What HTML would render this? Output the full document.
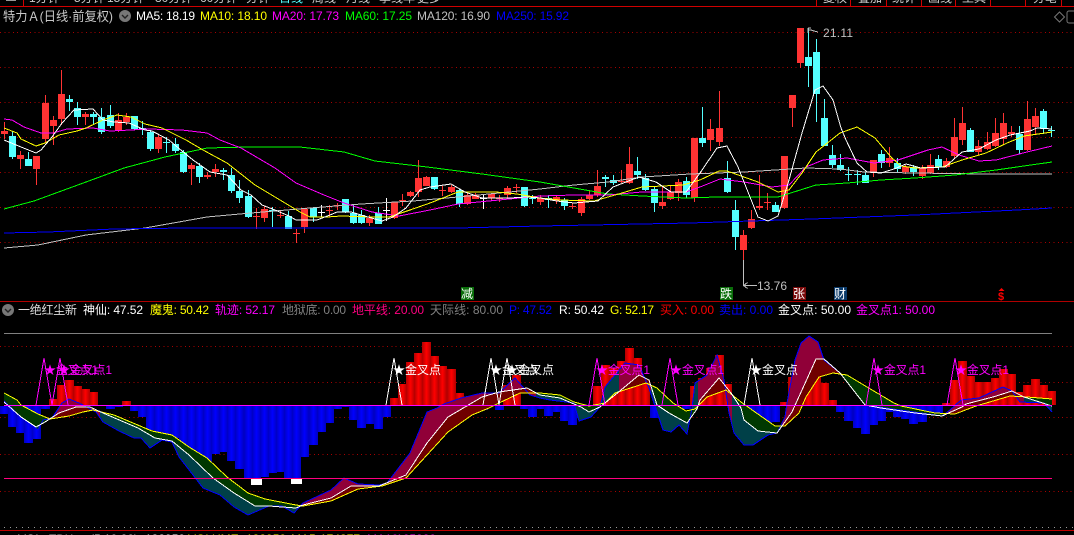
<!DOCTYPE html>
<html><head><meta charset="utf-8"><style>
html,body{margin:0;padding:0;background:#000;width:1074px;height:535px;overflow:hidden}
svg{display:block;position:absolute;left:0;top:0}
text{font-family:"Liberation Sans","WenQuanYi Zen Hei","Noto Sans CJK SC",sans-serif;font-size:12px}
.s{shape-rendering:crispEdges}
</style></head><body>
<svg id="c" width="1074" height="535" viewBox="0 0 1074 535" xmlns="http://www.w3.org/2000/svg">
<defs>
<linearGradient id="gr" x1="0" x2="1" y1="0" y2="0"><stop offset="0" stop-color="#b00000"/><stop offset=".5" stop-color="#ff0000"/><stop offset="1" stop-color="#b00000"/></linearGradient>
<linearGradient id="gb" x1="0" x2="1" y1="0" y2="0"><stop offset="0" stop-color="#0000c0"/><stop offset=".5" stop-color="#0000ff"/><stop offset="1" stop-color="#0000c0"/></linearGradient>
</defs>
<rect width="1074" height="535" fill="#000"/>
<g id="grid" class="s"></g>
<g id="candles" class="s"></g>
<g id="malines" class="s" fill="none"></g>
<g id="bars" class="s"></g>
<g id="rib" class="s"></g>
<g id="lines2" class="s" fill="none"></g>

<!-- top bar -->
<g fill="#ccc">
<text x="29" y="2">1分钟</text><text x="74" y="2">5分钟</text><text x="107" y="2">15分钟</text><text x="155" y="2">30分钟</text><text x="200" y="2">60分钟</text><text x="246" y="2">分钟</text><text x="279" y="2" fill="#54ffff">日线</text><text x="312" y="2">周线</text><text x="346" y="2">月线</text><text x="379" y="2">季线年</text><text x="417" y="2">更多</text>
<text x="823" y="2">复权</text><text x="858" y="2">叠加</text><text x="892" y="2">统计</text><text x="928" y="2">画线</text><text x="962" y="2">工具</text><text x="1033" y="2">分笔</text>
</g>
<g class="s">
<rect x="0" y="6" width="1074" height="1" fill="#d00000"/>
<rect x="23" y="0" width="1" height="6" fill="#d00000"/>
<rect x="816" y="0" width="1" height="6" fill="#d00000"/><rect x="850" y="0" width="1" height="6" fill="#d00000"/><rect x="886" y="0" width="1" height="6" fill="#d00000"/><rect x="921" y="0" width="1" height="6" fill="#d00000"/><rect x="955" y="0" width="1" height="6" fill="#d00000"/><rect x="990" y="0" width="1" height="6" fill="#d00000"/><rect x="1025" y="0" width="1" height="6" fill="#d00000"/><rect x="1061" y="0" width="1" height="6" fill="#d00000"/>
<rect x="6" y="0" width="10" height="1" fill="#999"/>
</g>

<!-- main header -->
<text x="3" y="21" fill="#c8c8c8" textLength="110" lengthAdjust="spacingAndGlyphs" style="font-size:13px">特力Ａ(日线·前复权)</text>
<circle cx="125" cy="16" r="6" fill="#777"/><path d="M122 15l3 3 3-3" stroke="#222" stroke-width="1.4" fill="none"/>
<text x="136" y="20" fill="#fff" textLength="59">MA5: 18.19</text>
<text x="200" y="20" fill="#ffff00" textLength="67">MA10: 18.10</text>
<text x="272" y="20" fill="#ff00ff" textLength="67">MA20: 17.73</text>
<text x="345" y="20" fill="#00ff00" textLength="67">MA60: 17.25</text>
<text x="417" y="20" fill="#c0c0c0" textLength="73">MA120: 16.90</text>
<text x="496" y="20" fill="#0000ff" textLength="73">MA250: 15.92</text>
<path d="M1059.5 12l5 5-5 5-5-5z" stroke="#777" fill="none"/>
<rect x="1067" y="11" width="12" height="12" rx="2" stroke="#777" fill="none"/>

<!-- price marks -->
<path d="M808 28h3M808 30h3M808 28v5M811 30l3 1 4 1" stroke="#c0c0c0" fill="none" class="s"/>
<text x="823" y="37" fill="#c0c0c0" textLength="30">21.11</text>
<path d="M743.500 260V285.500H757M743.500 285.500l4-3M743.500 285.500l4 3" stroke="#c0c0c0" fill="none" class="s"/>
<text x="757" y="290" fill="#c0c0c0" textLength="30">13.76</text>

<!-- tags -->
<rect x="461" y="287" width="13" height="13" fill="#0a6e0a"/><text x="461" y="298" fill="#fff" textLength="13" style="font-size:12px">减</text>
<rect x="720" y="287" width="13" height="13" fill="#0a6e0a"/><text x="720" y="298" fill="#fff" textLength="13" style="font-size:12px">跌</text>
<rect x="793" y="287" width="13" height="13" fill="#7a0a0a"/><text x="793" y="298" fill="#fff" textLength="13" style="font-size:12px">张</text>
<rect x="834" y="287" width="13" height="13" fill="#0a3a6a"/><text x="834" y="298" fill="#fff" textLength="13" style="font-size:12px">财</text>
<text x="998" y="300" fill="#ff0000" style="font-size:11px;font-weight:bold">$</text>
<path d="M1001.500 288l-3 3h6z" fill="#ff0000"/>

<rect x="0" y="301" width="1074" height="1" fill="#b00000" class="s"/>

<!-- indicator header -->
<circle cx="8" cy="310" r="6" fill="#777"/><path d="M5 309l3 3 3-3" stroke="#222" stroke-width="1.400" fill="none"/>
<text x="18" y="314" fill="#ddd" textLength="59">一绝红尘新</text>
<text x="83" y="314" fill="#fff" textLength="60">神仙: 47.52</text>
<text x="150" y="314" fill="#ffff00" textLength="59">魔鬼: 50.42</text>
<text x="215" y="314" fill="#ff00ff" textLength="60">轨迹: 52.17</text>
<text x="282" y="314" fill="#808080" textLength="64">地狱底: 0.00</text>
<text x="352" y="314" fill="#ff0080" textLength="72">地平线: 20.00</text>
<text x="430" y="314" fill="#808080" textLength="73">天际线: 80.00</text>
<text x="509" y="314" fill="#0000ff" textLength="43">P: 47.52</text>
<text x="559" y="314" fill="#fff" textLength="45">R: 50.42</text>
<text x="610" y="314" fill="#ffff00" textLength="44">G: 52.17</text>
<text x="660" y="314" fill="#ff0000" textLength="54">买入: 0.00</text>
<text x="719" y="314" fill="#0000ff" textLength="54">卖出: 0.00</text>
<text x="778" y="314" fill="#fff" textLength="73">金叉点: 50.00</text>
<text x="856" y="314" fill="#ff00ff" textLength="79">金叉点1: 50.00</text>

<!-- signal labels -->
<g fill="#ff00ff" style="font-size:12px">
<text x="44" y="374" textLength="54">★金叉点1</text><text x="58" y="374" textLength="54">★金叉点1</text>
<text x="596" y="374" textLength="54">★金叉点1</text><text x="670" y="374" textLength="54">★金叉点1</text>
<text x="872" y="374" textLength="54">★金叉点1</text><text x="955" y="374" textLength="54">★金叉点1</text>
</g>
<g fill="#fff">
<text x="393" y="374" textLength="48">★金叉点</text><text x="490" y="374" textLength="48">★金叉点</text><text x="506" y="374" textLength="48">★金叉点</text><text x="750" y="374" textLength="48">★金叉点</text>
</g>

<!-- white blocks -->
<rect x="251" y="479" width="11" height="6" fill="#fff" class="s"/><rect x="291" y="479" width="11" height="5" fill="#fff" class="s"/>

<rect x="0" y="530" width="1074" height="1" fill="#c00000" class="s"/>
<circle cx="8" cy="541" r="6" fill="#777"/>
<text x="18" y="543" fill="#ddd">VOL</text><text x="45" y="543" fill="#aaa">-TDX</text><text x="90" y="543" fill="#ddd">(5,10,20)</text>
<text x="145" y="543" fill="#fff">132950</text><text x="188" y="543" fill="#ffff00">VOLUME:</text><text x="246" y="543" fill="#ffff00">132950</text><text x="291" y="543" fill="#ffff00">MA5:</text><text x="320" y="543" fill="#ffff00">174377</text><text x="367" y="543" fill="#ff00ff">MA10:</text><text x="396" y="543" fill="#ff00ff">165880</text>
</svg>
<script>
(function(){
var NS='http://www.w3.org/2000/svg';
function el(p,n,a){var e=document.createElementNS(NS,n);for(var k in a)e.setAttribute(k,a[k]);document.getElementById(p).appendChild(e);return e;}
var X=function(i){return 4+8.12*i;};
// grid
[32,67,102,137,172,207,242,346,382,417,454,491].forEach(function(y){
 el('grid','line',{x1:0,x2:1074,y1:y+.5,y2:y+.5,stroke:'#a80000','stroke-dasharray':'1 3.300'});
});
el('grid','line',{x1:4,x2:1074,y1:527.5,y2:527.5,stroke:'#999','stroke-dasharray':'1 5'});
el('grid','rect',{x:4,y:333,width:1048,height:1,fill:'#808080'});
// candles: type, high, top, bottom, low
var C=[
'r122,131,134,139','c131,136,157,159','r151,155,159,169','c152,159,166,166','r156,156,169,185','r95,103,139,143','r116,120,126,145','r70,94,119,125','c95,99,102,111','c102,108,117,125',
'r112,114,117,125','c112,114,117,124','c108,117,132,134','c105,115,126,128','r113,120,130,132','r113,117,122,125','c116,116,129,130','c121,128,129,135','c130,132,149,151','r135,137,149,153',
'c137,142,143,153','c138,144,151,153','c150,152,172,173','r163,165,169,185','c163,166,177,183','r172,175,177,179','r164,169,172,177','c168,170,172,180','c168,175,191,193','c180,191,198,203',
'c190,196,217,218','r208,216,217,229','r206,209,218,222','c207,210,211,227','r210,215,216,218','c211,216,229,229','r229,233,234,243','r209,209,227,233','c208,208,217,222','w205,212,213,217',
'r205,210,211,217','r203,205,206,210','c199,199,212,213','c205,213,223,224','c210,215,223,224','r215,218,223,226','c207,213,224,224','w198,210,211,221','r202,202,218,219','r194,200,201,206',
'r191,192,196,197','r160,178,192,197','r176,177,186,186','c177,177,189,190','r186,190,191,196','r185,187,192,193','c189,190,204,207','r193,195,204,205','r193,195,199,199','w195,198,199,209',
'r193,194,198,201','r195,198,199,202','r186,188,195,198','r184,187,188,193','c187,187,206,207','c195,198,199,204','r195,198,202,205',
'c195,198,200,208','r195,197,201,204','c198,200,206,210','r203,206,207,209','r197,199,213,216','r190,195,199,200','r170,186,195,197','c175,177,179,187','c175,180,183,185','r170,181,182,183','r147,164,183,184','c157,171,175,179','c174,178,190,191','c186,189,203,212','r186,202,206,209','r185,192,199,200','r179,182,193,201','c177,181,195,198','r138,138,198,202','c107,138,143,147','r119,129,140,151','r91,128,142,146','c161,178,192,193','c200,210,237,250','r230,235,250,260','r210,219,228,229','r175,206,208,210','r193,202,203,210','c202,205,212,212','r156,156,208,209','r95,95,108,127','r28,28,63,68','c28,57,66,87','c39,52,94,122','c99,118,146,146','c145,155,165,168','c154,165,170,171','c167,174,175,181','c170,174,175,185','c172,175,183,183','r160,160,173,177','c150,154,163,168','r147,158,163,167','c158,163,169,173','r165,167,172,174','c165,167,172,176','r165,168,176,179','r154,165,173,174','c155,159,167,170','r158,161,167,168','r118,137,156,158','r107,123,140,145','c128,130,152,152','r140,146,152,155','r132,142,149,150','r118,133,146,147','r113,123,139,144','r126,132,134,137','c126,134,150,154','r101,119,150,151','r108,116,127,135','c109,111,129,134','c126,130,131,137'
];
var col={r:'#ff3333',c:'#54ffff',w:'#ffffff'};
C.forEach(function(s,i){
 var t=s[0],v=s.slice(1).split(',').map(Number),x=Math.round(X(i)),c=col[t];
 el('candles','rect',{x:x,y:v[0],width:1,height:v[3]-v[0],fill:c});
 el('candles','rect',{x:x-3,y:v[1],width:7,height:Math.max(1,v[2]-v[1]),fill:c});
});
// MA lines
function pl(g,c,p){el(g,'polyline',{points:p,stroke:c,fill:'none'});}
pl('malines','#c0c0c0','4,248 38,245 86,235 145,228 207,217 251,213 310,208 361,204 413,201 458,197 540,189 574,185 608,182 642,177 690,174 744,172 806,168 840,169 864,172 915,173 983,174 1052,174');
pl('malines','#0000ff','4,233 48,232 114,229 186,228 458,228 540,226 591,225 690,223 812,219 915,215 1017,210 1052,208');
pl('malines','#00ff00','4,209 34,201 86,182 124,168 165,157 207,148 248,147 300,147 344,152 375,161 427,167 482,174 540,182 574,188 608,194 642,196 686,198 717,197 778,197 816,185 847,183 881,180 915,178 955,175 996,170 1052,162');
pl('malines','#ff00ff','4,119 12,120 24,127 41,133 53,133 67,129 93,128 110,131 131,130 148,129 182,130 207,133 220,140 241,148 275,168 296,183 324,195 344,203 372,212 399,216 430,210 458,204 499,200 540,196 574,195 608,195 642,192 686,192 700,187 720,179 744,182 772,187 789,185 806,167 823,160 847,158 874,163 898,160 928,150 942,147 959,155 979,161 996,160 1027,152 1052,146');
pl('malines','#ffff00','4,128 17,133 21,139 36,146 45,143 59,135 77,131 86,128 103,120 117,115 131,117 145,124 162,128 186,140 203,150 227,163 255,185 275,197 300,212 310,217 327,217 341,216 372,217 389,217 410,210 430,203 458,192 496,192 517,194 540,198 560,200 594,201 622,193 642,187 683,185 700,180 719,171 727,171 758,182 778,192 789,190 802,173 816,152 840,133 857,127 875,138 891,157 901,166 915,168 942,167 962,160 986,153 1007,143 1024,136 1052,132');
pl('malines','#ffffff','4,140 21,147 36,153 41,150 52,137 62,123 74,110 93,109 103,120 114,122 129,123 145,130 152,131 169,140 182,151 193,160 210,172 227,175 241,190 251,195 262,205 275,210 289,216 296,220 317,220 330,215 337,212 351,212 368,217 382,221 393,217 406,208 420,190 430,187 451,184 465,192 482,198 510,198 527,197 540,198 557,201 574,203 598,201 613,187 639,177 656,182 671,192 686,192 700,173 717,148 727,146 738,167 748,192 758,217 768,221 778,216 789,180 802,133 815,90 823,86 833,100 841,128 846,140 857,163 867,172 881,173 894,169 906,164 921,168 945,167 962,152 979,149 996,140 1010,135 1030,131 1037,128 1052,129');
// bars: top or bottom y
var B=[414,427,433,443,439,409,399,385,380,386,389,392,406,409,407,401,411,417,430,432,437,438,445,455,462,462,454,452,461,469,478,478,477,473,472,478,478,457,445,432,423,409,407,420,428,424,429,417,398,384,362,353,342,356,366,369,393,397,397,410,393,410,385,375,409,417,409,416,412,421,425,418,408,386,365,368,361,348,358,383,418,418,407,406,409,386,378,368,355,384,413,432,435,430,425,422,402,377,356,356,365,383,400,412,421,428,434,425,421,412,417,419,424,422,413,413,403,380,361,376,382,382,378,369,374,392,385,379,385,391];
B.forEach(function(y,i){
 var x=Math.round(X(i))-4;
 if(y<405) el('bars','rect',{x:x,y:y,width:9,height:405-y,fill:'url(#gr)'});
 else if(y>406) el('bars','rect',{x:x,y:406,width:9,height:y-406,fill:'url(#gb)'});
});
// ribbons
function P(s){return s.split(' ').map(function(a){return a.split(',').map(Number);}).sort(function(a,b){return a[0]-b[0];});}
function V(p,x){if(x<=p[0][0])return p[0][1];for(var i=1;i<p.length;i++){if(x<=p[i][0]){var a=p[i-1],b=p[i];return a[1]+(b[1]-a[1])*(x-a[0])/Math.max(.001,b[0]-a[0]);}}return p[p.length-1][1];}
var G='4,393 17,400 21,405 38,414 50,419 69,416 83,412 93,410 114,415 152,431 172,435 189,447 207,458 227,477 248,493 265,499 296,505 303,506 331,501 358,489 382,486 406,478 427,455 448,432 472,415 489,408 499,403 520,393 540,393 560,395 574,402 589,406 605,403 615,393 646,383 657,388 673,403 686,411 695,409 707,397 726,390 741,402 755,412 775,426 785,426 799,413 806,397 819,377 833,373 847,375 867,387 894,403 901,406 935,413 955,414 976,406 1010,396 1027,397 1052,399';
var R='4,402 21,417 36,427 45,422 59,413 76,407 90,407 103,413 138,428 155,438 172,441 189,455 213,478 234,493 255,506 269,506 296,508 303,505 331,498 351,486 379,486 406,475 427,443 448,417 482,397 499,392 513,390 527,388 540,395 560,398 581,407 589,412 600,407 615,395 639,375 649,380 657,405 669,413 687,423 697,409 700,400 719,378 731,393 741,408 744,420 758,431 777,433 792,412 802,390 816,359 824,359 840,373 865,405 881,408 915,413 942,416 962,407 966,404 993,397 1012,391 1024,397 1052,406';
var Bl='4,401 21,417 38,430 43,420 52,418 62,403 69,399 79,403 96,412 103,422 119,431 134,438 141,438 150,448 162,440 172,442 179,457 193,475 203,488 220,495 234,507 248,515 269,506 282,506 294,513 303,503 331,490 344,478 358,484 379,485 387,483 410,453 427,412 437,408 444,404 461,398 482,393 499,393 515,378 530,395 540,398 550,400 574,403 579,421 591,417 600,407 605,387 625,363 639,365 649,388 657,412 663,430 671,432 679,425 687,434 692,408 695,383 707,375 717,355 724,380 729,413 734,433 744,445 753,445 768,435 777,433 785,417 787,403 795,360 801,343 809,336 818,342 824,360 840,373 865,405 942,416 950,410 961,400 979,398 1003,387 1012,391 1020,402 1044,403 1052,412';
var pg=P(G),pr=P(R),pb=P(Bl);
var d={a:'',b:'',c:'',e:''};
for(var x=4;x<1052;x++){
 var g=V(pg,x+.5),r=V(pr,x+.5),b=V(pb,x+.5);
 var up=r<g;
 var k1=up?'a':'c',k2=up?'b':'e';
 d[k1]+='M'+x+' '+Math.round(Math.min(b,r))+'h1V'+Math.round(Math.max(b,r))+'h-1z';
 d[k2]+='M'+x+' '+Math.round(Math.min(r,g))+'h1V'+Math.round(Math.max(r,g))+'h-1z';
}
el('rib','path',{d:d.a,fill:'#900038'});
el('rib','path',{d:d.b,fill:'#700000'});
el('rib','path',{d:d.c,fill:'#004048'});
el('rib','path',{d:d.e,fill:'#003800'});
pl('lines2','#0000ff',Bl);
pl('lines2','#ffff00',G);
pl('lines2','#ffffff',R);
// signals
[[44,'#ff00ff'],[60,'#ff00ff'],[394,'#fff'],[491,'#fff'],[507,'#fff'],[597,'#ff00ff'],[670,'#ff00ff'],[752,'#fff'],[874,'#ff00ff'],[955,'#ff00ff']].forEach(function(a){
 pl('lines2',a[1],(a[0]-8)+',405 '+a[0]+',358 '+(a[0]+8)+',405');
});
el('lines2','rect',{x:4,y:405,width:1048,height:1,fill:'#ff00ff'});
el('lines2','rect',{x:4,y:478,width:1048,height:1,fill:'#ff0080'});
})();
</script>
</body></html>
